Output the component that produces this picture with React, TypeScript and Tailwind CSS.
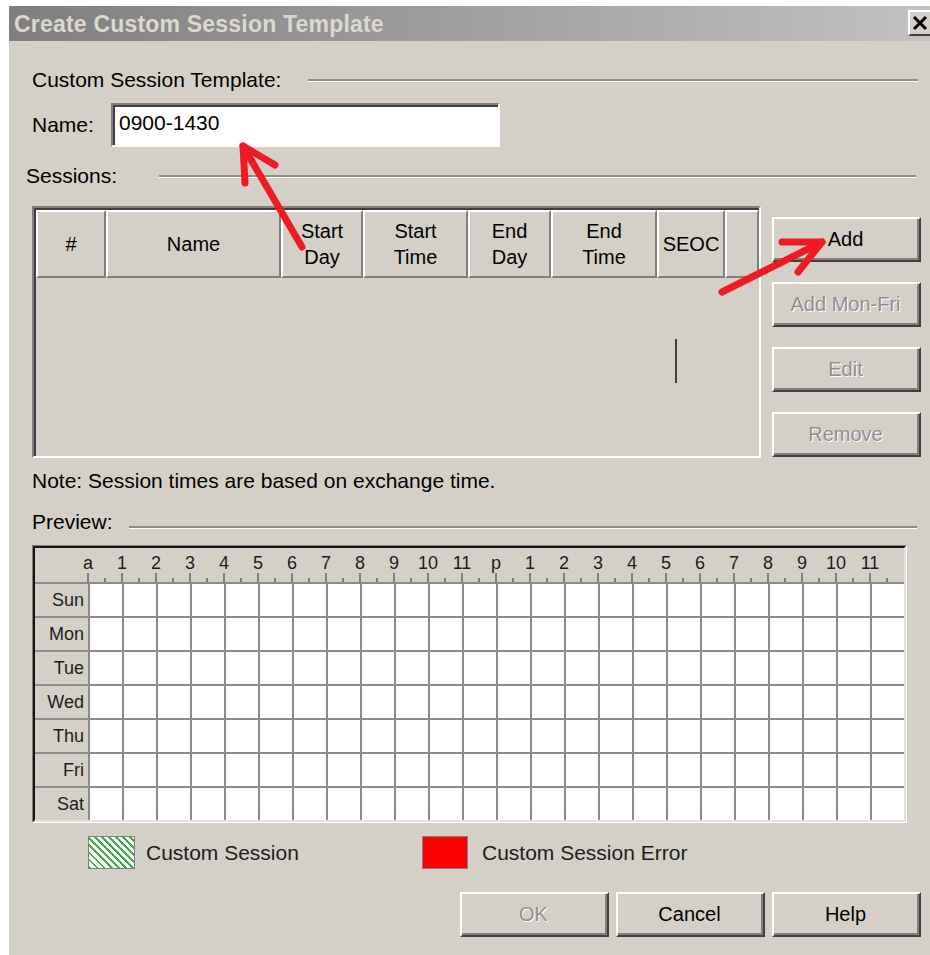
import React from "react";

const HOURS = ["a", "1", "2", "3", "4", "5", "6", "7", "8", "9", "10", "11", "p", "1", "2", "3", "4", "5", "6", "7", "8", "9", "10", "11"];
const DAYS = ["Sun", "Mon", "Tue", "Wed", "Thu", "Fri", "Sat"];

const COLUMNS = [
  { label: ["#"], w: "w-[70px]" },
  { label: ["Name"], w: "w-[175px]" },
  { label: ["Start", "Day"], w: "w-[82px]" },
  { label: ["Start", "Time"], w: "w-[105px]" },
  { label: ["End", "Day"], w: "w-[83px]" },
  { label: ["End", "Time"], w: "w-[106px]" },
  { label: ["SEOC"], w: "w-[68px]" },
  { label: [""], w: "flex-1" },
];

function Button({ label, disabled }: { label: string; disabled?: boolean }) {
  return (
    <div className="h-[45px] w-[149px] border-2 border-t-white border-l-white border-r-[#404040] border-b-[#404040]">
      <div className="h-full w-full flex items-center justify-center border-r-2 border-b-2 border-r-[#808080] border-b-[#808080]">
        <span
          className={
            disabled
              ? "text-[20px] text-[#8f8f8f] [text-shadow:1px_1px_0_#fff]"
              : "text-[20px] text-black"
          }
        >
          {label}
        </span>
      </div>
    </div>
  );
}

function Etched({ className }: { className: string }) {
  return <div className={"h-[3px] border-t-2 border-t-[#8c8c8c] border-b border-b-white " + className} />;
}

export default function App() {
  return (
    <div
      className="relative w-[930px] h-[955px] bg-white overflow-hidden text-black"
      style={{ fontFamily: '"Liberation Sans", Arial, sans-serif' }}
    >
      <div className="ml-[9px] mt-[6px] w-[921px] h-[949px] bg-[#d4d0c8] flex flex-col">
        {/* title bar */}
        <div className="h-[35px] flex items-start bg-gradient-to-r from-[#7f7f7f] to-[#c2c2c2]">
          <span className="pl-[5px] pt-[1px] text-[23px] font-bold text-[#dcd8d0] tracking-[0.2px]">
            Create Custom Session Template
          </span>
          <div className="ml-auto mt-[4px] h-[26px] w-[22px] flex items-center justify-center bg-[#d4d0c8] border-t-2 border-l-2 border-t-white border-l-white border-b-2 border-b-[#404040]">
            <svg width="16" height="16" viewBox="0 0 16 16">
              <path d="M2 2 L14 14 M14 2 L2 14" stroke="#000" strokeWidth="3" />
            </svg>
          </div>
        </div>

        <div className="pl-[23px] pr-[9px] flex flex-col">
          {/* template heading */}
          <div className="mt-[27px] h-[24px] flex items-center">
            <span className="text-[21px]">Custom Session Template:</span>
            <Etched className="flex-1 ml-[27px] mr-[3px]" />
          </div>

          {/* name field */}
          <div className="mt-[11px] flex items-center">
            <span className="text-[21px] w-[79px]">Name:</span>
            <div className="h-[44px] w-[389px] border-2 border-t-[#808080] border-l-[#808080] border-b-white border-r-white">
              <div className="h-full w-full bg-white border-t-2 border-l-2 border-t-[#404040] border-l-[#404040] flex items-center pl-[4px] pb-[6px]">
                <span className="text-[21px]">0900-1430</span>
              </div>
            </div>
          </div>

          {/* sessions heading */}
          <div className="mt-[17px] -ml-[6px] h-[24px] flex items-center">
            <span className="text-[21px]">Sessions:</span>
            <Etched className="flex-1 ml-[42px] mr-[5px]" />
          </div>

          {/* sessions list and actions */}
          <div className="mt-[18px] flex items-start">
            <div className="relative h-[252px] w-[729px] border-2 border-t-[#808080] border-l-[#808080] border-b-white border-r-white">
              <div className="h-full w-full border-t-2 border-l-2 border-t-[#404040] border-l-[#404040] flex flex-col">
                <div className="h-[68px] flex">
                  {COLUMNS.map((c, i) => (
                    <div
                      key={i}
                      className={
                        c.w +
                        " h-full flex flex-col items-center justify-center border-2 border-t-white border-l-white border-r-[#808080] border-b-[#808080] text-[20px] leading-[26px]"
                      }
                    >
                      {c.label.map((l, j) => (
                        <span key={j}>{l}</span>
                      ))}
                    </div>
                  ))}
                </div>
                <div className="flex-1" />
              </div>
              <div className="absolute left-[641px] top-[131px] h-[44px] w-[2px] bg-[#404040]" />
            </div>

            <div className="ml-[11px] mt-[11px] flex flex-col gap-[20px]">
              <Button label="Add" />
              <Button label="Add Mon-Fri" disabled />
              <Button label="Edit" disabled />
              <Button label="Remove" disabled />
            </div>
          </div>

          <div className="mt-[11px] h-[24px] flex items-center">
            <span className="text-[21px]">Note: Session times are based on exchange time.</span>
          </div>

          {/* preview heading */}
          <div className="mt-[17px] h-[24px] flex items-center">
            <span className="text-[21px]">Preview:</span>
            <Etched className="flex-1 ml-[16px] mr-[4px] mt-[10px]" />
          </div>

          {/* weekly preview grid */}
          <div className="mt-[11px] w-[875px] border-t border-l border-t-[#808080] border-l-[#808080] border-b border-r border-b-white border-r-white">
            <div className="border-t-2 border-l-2 border-t-[#141414] border-l-[#141414] border-b-2 border-r-2 border-b-[#e4e1dc] border-r-[#e4e1dc]">
              <div className="h-[34px] flex">
                <div className="w-[36px] shrink-0" />
                {HOURS.map((h, i) => (
                  <div key={i} className="relative w-[34px] h-full shrink-0 flex justify-center">
                    <span className="mt-[5px] text-[18px] leading-[20px] text-[#1c1c1c]">{h}</span>
                    <div className="absolute bottom-0 left-[16px] h-[9px] w-[2px] bg-[#808080]" />
                    <div className="absolute bottom-0 right-[-1px] h-[4px] w-[2px] bg-[#808080]" />
                  </div>
                ))}
              </div>
              {DAYS.map((d) => (
                <div key={d} className="flex h-[34px]">
                  <div className="w-[53px] shrink-0 border-t-2 border-t-[#8c8c8c] flex items-center justify-end pr-[4px]">
                    <span className="text-[18px] text-[#1c1c1c]">{d}</span>
                  </div>
                  {HOURS.map((_, i) => (
                    <div key={i} className="w-[34px] shrink-0 bg-white border-t-2 border-l-2 border-[#8c8c8c]" />
                  ))}
                </div>
              ))}
            </div>
          </div>

          {/* legend */}
          <div className="mt-[13px] h-[33px] flex items-center">
            <div className="ml-[56px] w-[334px] flex items-center">
              <div className="w-[47px] h-[33px] border border-[#808080] bg-[repeating-linear-gradient(45deg,#3fae49_0_2px,#ffffff_2px_5px)]" />
              <span className="ml-[11px] text-[21px] text-[#1c1c1c]">Custom Session</span>
            </div>
            <div className="w-[46px] h-[33px] border border-[#808080] bg-[#ff0000]" />
            <span className="ml-[14px] text-[21px] text-[#1c1c1c]">Custom Session Error</span>
          </div>

          {/* dialog actions */}
          <div className="mt-[23px] flex justify-end gap-[7px]">
            <Button label="OK" disabled />
            <Button label="Cancel" />
            <Button label="Help" />
          </div>
        </div>
      </div>

      {/* red callout arrows */}
      <svg className="absolute left-0 top-0 pointer-events-none" width="930" height="955" viewBox="0 0 930 955">
        <g stroke="#ef1a24" strokeWidth="7" strokeLinecap="round" strokeLinejoin="round" fill="none">
          <path d="M302 247 L243 146" />
          <path d="M245 183 L243 146 L275 165" />
          <path d="M722 292 L822 242" />
          <path d="M782 242 L822 242 L798 272" />
        </g>
      </svg>
    </div>
  );
}
